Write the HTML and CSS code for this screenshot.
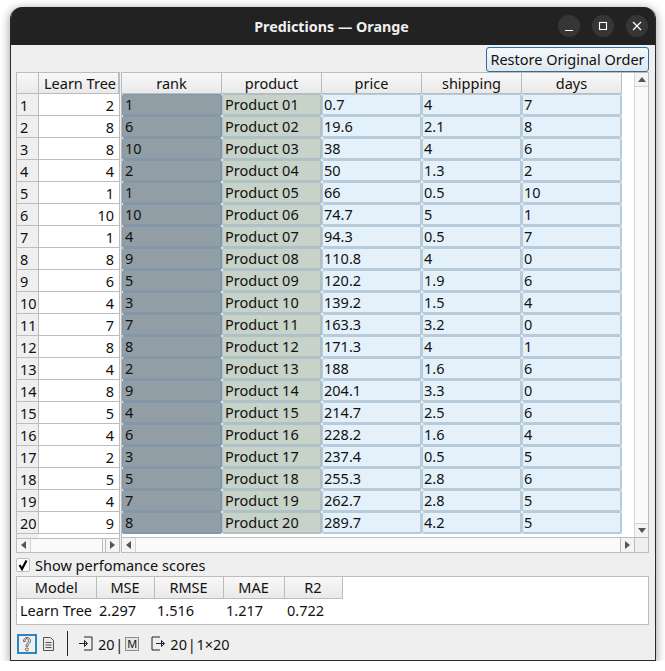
FILE: index.html
```html
<!DOCTYPE html>
<html lang="en">
<head>
  <title>Predictions — Orange</title>
  <link rel="stylesheet" href="styles.css">
</head>
<body>

<div class="window">
  <div class="titlebar">
    <span class="title">Predictions — Orange</span>
    <div class="winbtns">
      <span class="winbtn"><svg width="12" height="12" viewBox="0 0 12 12"><path d="M2 10.500h8" stroke="#fff" stroke-width="1.200"/></svg></span>
      <span class="winbtn"><svg width="12" height="12" viewBox="0 0 12 12"><rect x="2.500" y="2.500" width="7" height="7" fill="none" stroke="#fff" stroke-width="1.100"/></svg></span>
      <span class="winbtn"><svg width="12" height="12" viewBox="0 0 12 12"><path d="M2 2l8 8M10 2l-8 8" stroke="#fff" stroke-width="1.200"/></svg></span>
    </div>
  </div>

  <div class="content">
    <div class="toprow">
      <button class="restore">Restore Original Order</button>
    </div>

    <div class="tables">
      <div class="pane pane-left">
        <table class="grid grid-left">
          <thead>
            <tr><th class="rowhead"></th><th class="learn">Learn Tree</th></tr>
          </thead>
          <tbody>
            <tr><th>1</th><td>2</td></tr>
            <tr><th>2</th><td>8</td></tr>
            <tr><th>3</th><td>8</td></tr>
            <tr><th>4</th><td>4</td></tr>
            <tr><th>5</th><td>1</td></tr>
            <tr><th>6</th><td>10</td></tr>
            <tr><th>7</th><td>1</td></tr>
            <tr><th>8</th><td>8</td></tr>
            <tr><th>9</th><td>6</td></tr>
            <tr><th>10</th><td>4</td></tr>
            <tr><th>11</th><td>7</td></tr>
            <tr><th>12</th><td>8</td></tr>
            <tr><th>13</th><td>4</td></tr>
            <tr><th>14</th><td>8</td></tr>
            <tr><th>15</th><td>5</td></tr>
            <tr><th>16</th><td>4</td></tr>
            <tr><th>17</th><td>2</td></tr>
            <tr><th>18</th><td>5</td></tr>
            <tr><th>19</th><td>4</td></tr>
            <tr><th>20</th><td>9</td></tr>
          </tbody>
        </table>
        <div class="gridgap"></div>
        <div class="hscroll">
          <span class="arrow"><i class="tri tri-left"></i></span>
          <span class="track track-end"></span>
          <span class="arrow arrow-r"><i class="tri tri-right"></i></span>
        </div>
      </div>

      <div class="pane pane-right">
        <div class="pane-main">
          <div class="pane-body">
            <table class="grid grid-right">
              <thead>
                <tr><th>rank</th><th>product</th><th>price</th><th>shipping</th><th>days</th></tr>
              </thead>
              <tbody>
                <tr><td class="c-rank">1</td><td class="c-prod">Product 01</td><td>0.7</td><td>4</td><td>7</td></tr>
                <tr><td class="c-rank">6</td><td class="c-prod">Product 02</td><td>19.6</td><td>2.1</td><td>8</td></tr>
                <tr><td class="c-rank">10</td><td class="c-prod">Product 03</td><td>38</td><td>4</td><td>6</td></tr>
                <tr><td class="c-rank">2</td><td class="c-prod">Product 04</td><td>50</td><td>1.3</td><td>2</td></tr>
                <tr><td class="c-rank">1</td><td class="c-prod">Product 05</td><td>66</td><td>0.5</td><td>10</td></tr>
                <tr><td class="c-rank">10</td><td class="c-prod">Product 06</td><td>74.7</td><td>5</td><td>1</td></tr>
                <tr><td class="c-rank">4</td><td class="c-prod">Product 07</td><td>94.3</td><td>0.5</td><td>7</td></tr>
                <tr><td class="c-rank">9</td><td class="c-prod">Product 08</td><td>110.8</td><td>4</td><td>0</td></tr>
                <tr><td class="c-rank">5</td><td class="c-prod">Product 09</td><td>120.2</td><td>1.9</td><td>6</td></tr>
                <tr><td class="c-rank">3</td><td class="c-prod">Product 10</td><td>139.2</td><td>1.5</td><td>4</td></tr>
                <tr><td class="c-rank">7</td><td class="c-prod">Product 11</td><td>163.3</td><td>3.2</td><td>0</td></tr>
                <tr><td class="c-rank">8</td><td class="c-prod">Product 12</td><td>171.3</td><td>4</td><td>1</td></tr>
                <tr><td class="c-rank">2</td><td class="c-prod">Product 13</td><td>188</td><td>1.6</td><td>6</td></tr>
                <tr><td class="c-rank">9</td><td class="c-prod">Product 14</td><td>204.1</td><td>3.3</td><td>0</td></tr>
                <tr><td class="c-rank">4</td><td class="c-prod">Product 15</td><td>214.7</td><td>2.5</td><td>6</td></tr>
                <tr><td class="c-rank">6</td><td class="c-prod">Product 16</td><td>228.2</td><td>1.6</td><td>4</td></tr>
                <tr><td class="c-rank">3</td><td class="c-prod">Product 17</td><td>237.4</td><td>0.5</td><td>5</td></tr>
                <tr><td class="c-rank">5</td><td class="c-prod">Product 18</td><td>255.3</td><td>2.8</td><td>6</td></tr>
                <tr><td class="c-rank">7</td><td class="c-prod">Product 19</td><td>262.7</td><td>2.8</td><td>5</td></tr>
                <tr><td class="c-rank">8</td><td class="c-prod">Product 20</td><td>289.7</td><td>4.2</td><td>5</td></tr>
              </tbody>
            </table>
          </div>
          <div class="vscroll">
            <span class="arrow-v"><i class="tri tri-up"></i></span>
            <span class="track"></span>
            <span class="arrow-v arrow-d"><i class="tri tri-down"></i></span>
          </div>
        </div>
        <div class="hscroll hscroll-r">
          <span class="arrow"><i class="tri tri-left"></i></span>
          <span class="track"></span>
          <span class="arrow arrow-r"><i class="tri tri-right"></i></span>
          <span class="corner"></span>
        </div>
      </div>
    </div>

    <label class="showscores">
      <span class="checkbox"><svg width="12" height="12" viewBox="0 0 12 12"><path d="M2.500 6l2.500 4L9.500 1.500" fill="none" stroke="#000" stroke-width="2.200"/></svg></span>
      Show perfomance scores
    </label>

    <div class="scores">
      <table class="scoretable">
        <thead>
          <tr><th class="s1">Model</th><th class="s2">MSE</th><th class="s3">RMSE</th><th class="s4">MAE</th><th class="s5">R2</th></tr>
        </thead>
        <tbody>
          <tr><td>Learn Tree</td><td>2.297</td><td>1.516</td><td>1.217</td><td>0.722</td></tr>
        </tbody>
      </table>
    </div>
  </div>

  <div class="statusbar">
    <span class="helpbtn">
      <svg width="16" height="16" viewBox="0 0 16 16"><path d="M4.500 5.500C4.500 3 6 1.500 8 1.500s3.500 1.300 3.500 3.300c0 2.500-2.600 2.700-2.600 5.500H7c0-3.500 2.600-3.300 2.600-5.600 0-1.200-.7-2-1.700-2s-1.700.9-1.700 2.800z" fill="#f4f4f4" stroke="#555" stroke-width=".9"/><circle cx="7.900" cy="13.400" r="1.500" fill="#f4f4f4" stroke="#555" stroke-width=".9"/></svg>
    </span>
    <span class="docbtn">
      <svg width="13" height="16" viewBox="0 0 13 16"><path d="M1.500 1.500h7l3 3v10h-10z" fill="#e8e8e8" stroke="#555"/><path d="M3.500 6.500h6M3.500 9h6M3.500 11.500h6" stroke="#555"/></svg>
    </span>
    <span class="sep"></span>
    <svg class="inicon" width="14" height="15" viewBox="0 0 14 15"><path d="M5 1h8v13H5M0 7.500h8M5.500 4.500l3 3-3 3z" fill="none" stroke="#222"/></svg>
    <span class="stat">20 |</span>
    <span class="mbox">M</span>
    <svg class="outicon" width="15" height="15" viewBox="0 0 15 15"><path d="M9 1H1v13h8M5 7.500h8M10.500 4.500l3 3-3 3z" fill="none" stroke="#222"/></svg>
    <span class="stat">20 | 1×20</span>
  </div>
</div>

</body>
</html>
```

FILE: styles.css
```css
* {
  box-sizing: border-box;
}

body {
  margin: 0;
  padding: 0;
  font-family: "Noto Sans", sans-serif;
  font-size: 14.5px;
  color: #111;
  background-color: #fff;
}

.window {
  width: 646px;
  height: 654px;
  margin: 7px 0 0 10px;
  background-color: #efefef;
  border-radius: 12px 12px 0 0;
  box-shadow: 0 2px 10px 1px rgba(0,0,0,.35);
  border: 1px solid #2a2a2a;
  border-top: 0;
  overflow: hidden;
}

.titlebar {
  display: flex;
  align-items: center;
  justify-content: center;
  position: relative;
  height: 38px;
  padding-right: 3px;
  background-color: #222;
  color: #f0f0f0;
}
.title {
  font-size: 14.3px;
  font-weight: 700;
}
.winbtns {
  position: absolute;
  right: 7px;
  top: 8px;
  display: flex;
  gap: 12px;
}
.winbtn {
  display: flex;
  align-items: center;
  justify-content: center;
  width: 22px;
  height: 22px;
  border-radius: 50%;
  background-color: #363636;
}

.content {
  padding: 0 6px 0 5px;
}

.toprow {
  display: flex;
  justify-content: flex-end;
  height: 27px;
  padding-top: 2px;
}
.restore {
  width: 163px;
  height: 25px;
  padding: 0 0 2px;
  font: inherit;
  color: #111;
  background: linear-gradient(#f4f8fb, #dfe8ef);
  border: 1px solid #2a6f9f;
  border-radius: 3px;
}

.tables {
  display: flex;
  gap: 1px;
  height: 481px;
}
.pane {
  display: flex;
  flex-direction: column;
  border: 1px solid #bcbcbc;
  background-color: #fff;
}
.pane-left {
  width: 104px;
}
.pane-right {
  width: 528px;
}
.pane-main {
  display: flex;
  height: 465px;
}
.pane-body {
  flex: 1;
  background: linear-gradient(#efefef 0, #efefef 21px, #fff 21px);
}

.grid {
  border-collapse: separate;
  border-spacing: 0;
  table-layout: fixed;
}
.grid th {
  height: 21px;
  padding: 0;
  font-weight: 400;
  background: linear-gradient(#f8f8f8, #e9e9e9);
  border-right: 1px solid #bcbcbc;
  border-bottom: 1px solid #bcbcbc;
}
.grid td {
  height: 22px;
  padding: 0 1px;
  line-height: 18px;
}

.grid-left {
  width: 102px;
}
.grid-left .rowhead {
  width: 22px;
}
.grid-left .learn {
  text-align: right;
  padding-right: 2px;
  white-space: nowrap;
}
.grid-left tbody th {
  height: 22px;
  padding-left: 3px;
  text-align: left;
  background: #efefef;
  border-bottom: 1px solid #bcbcbc;
}
.grid-left td {
  padding-right: 5px;
  text-align: right;
  background-color: #fff;
  border-bottom: 1px solid #bcbcbc;
}
.gridgap {
  height: 4px;
  width: 22px;
  background-color: #efefef;
}

.grid-right {
  width: 500px;
  background-color: #fff;
}
.grid-right th {
  width: 100px;
}
.grid-right td {
  line-height: 18px;
  vertical-align: top;
  background-color: #e4f1fa;
  border-style: solid;
  border-width: 1px 2px 2px 1px;
  border-color: #b8cbda;
  border-radius: 2px;
}
.grid-right .c-rank {
  padding-left: 2px;
  background-color: #929ea6;
  border-color: #8497a8;
}
.grid-right .c-prod {
  padding-left: 2px;
  background-color: #c7d2c8;
  border-color: #aec1c6;
}

.hscroll {
  display: flex;
  height: 15px;
  background-color: #f6f6f6;
  border-top: 1px solid #bcbcbc;
}
.hscroll .track {
  flex: 1;
  background-color: #fafafa;
}
.hscroll .track-end {
  margin-right: 2px;
  border-right: 1px solid #bcbcbc;
}
.arrow {
  display: flex;
  align-items: center;
  justify-content: center;
  width: 14px;
  background-color: #f4f4f4;
  border-right: 1px solid #d4d4d4;
}
.arrow-r {
  border-right: 0;
  border-left: 1px solid #bcbcbc;
}
.corner {
  width: 14px;
  background-color: #efefef;
  border-left: 1px solid #bcbcbc;
}
.vscroll {
  display: flex;
  flex-direction: column;
  width: 14px;
  margin-left: 12px;
  background-color: #fafafa;
  border-left: 1px solid #d4d4d4;
}
.vscroll .track {
  flex: 1;
}
.arrow-v {
  display: flex;
  align-items: center;
  justify-content: center;
  height: 14px;
  background-color: #f4f4f4;
  border-bottom: 1px solid #d4d4d4;
}
.arrow-d {
  border-bottom: 0;
  border-top: 1px solid #d4d4d4;
}

.tri {
  display: block;
  width: 0;
  height: 0;
  border: 4px solid transparent;
}
.tri-left {
  border-left-width: 0;
  border-right: 5px solid #555;
}
.tri-right {
  border-right-width: 0;
  border-left: 5px solid #555;
}
.tri-up {
  border-top-width: 0;
  border-bottom: 5px solid #555;
}
.tri-down {
  border-bottom-width: 0;
  border-top: 5px solid #555;
}

.showscores {
  display: flex;
  align-items: center;
  gap: 5px;
  height: 23px;
  padding-top: 1px;
}
.checkbox {
  display: flex;
  align-items: center;
  justify-content: center;
  width: 14px;
  height: 14px;
  background-color: #fff;
  border: 1px solid #bcbcbc;
  border-radius: 2px;
}

.scores {
  height: 49px;
  background-color: #fff;
  border: 1px solid #bcbcbc;
}
.scoretable {
  border-collapse: collapse;
  table-layout: fixed;
  width: 325px;
}
.scoretable th {
  height: 21px;
  padding: 0;
  font-weight: 400;
  background: linear-gradient(#f8f8f8, #e9e9e9);
  border-right: 1px solid #bcbcbc;
  border-bottom: 1px solid #bcbcbc;
}
.scoretable td {
  height: 26px;
  padding: 0 3px 3px;
  white-space: nowrap;
}
.s1 { width: 79px; }
.s2 { width: 58px; }
.s3 { width: 69px; }
.s4 { width: 61px; }
.s5 { width: 58px; }

.statusbar {
  display: flex;
  align-items: center;
  height: 37px;
  padding-left: 6px;
}
.helpbtn {
  display: flex;
  align-items: center;
  justify-content: center;
  width: 20px;
  height: 20px;
  border: 2px solid #2d86c2;
}
.docbtn {
  display: flex;
  margin-left: 5px;
}
.sep {
  width: 1px;
  height: 25px;
  margin: 0 11px 0 12px;
  background-color: #222;
}
.stat {
  margin-left: 5px;
  word-spacing: -3px;
}
.mbox {
  width: 14px;
  height: 14px;
  margin: 0 12px 0 2px;
  font-size: 11px;
  line-height: 12px;
  text-align: center;
  background-color: #e6e6e6;
  border: 1px solid #9a8a7a;
}
.outicon + .stat {
  margin-left: 4px;
}
```
